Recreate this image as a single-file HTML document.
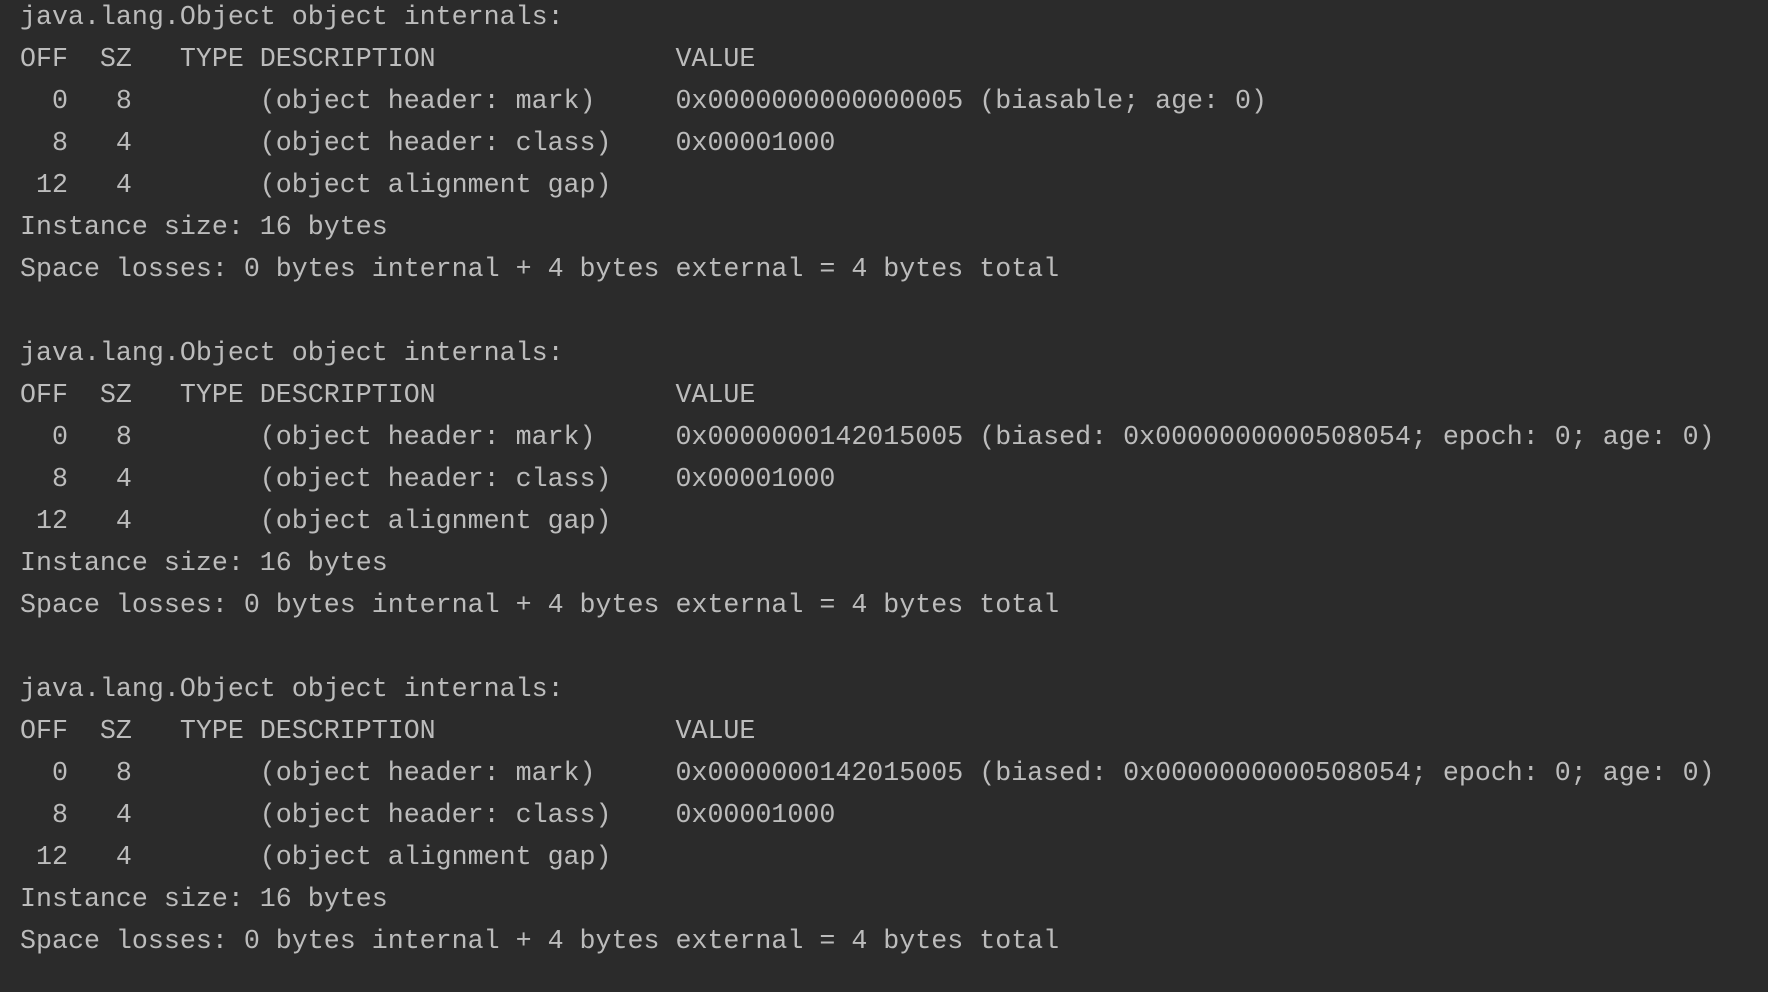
<!DOCTYPE html>
<html><head><meta charset="utf-8"><style>
html,body{margin:0;padding:0;background:#2b2b2b;width:1768px;height:992px;overflow:hidden}
pre{margin:0;position:absolute;left:20px;top:-3px;font-family:"Liberation Mono",monospace;font-size:26.65px;line-height:42px;color:#bcbcbc;white-space:pre}
</style></head><body><pre>java.lang.Object object internals:
OFF  SZ   TYPE DESCRIPTION               VALUE
  0   8        (object header: mark)     0x0000000000000005 (biasable; age: 0)
  8   4        (object header: class)    0x00001000
 12   4        (object alignment gap)
Instance size: 16 bytes
Space losses: 0 bytes internal + 4 bytes external = 4 bytes total

java.lang.Object object internals:
OFF  SZ   TYPE DESCRIPTION               VALUE
  0   8        (object header: mark)     0x0000000142015005 (biased: 0x0000000000508054; epoch: 0; age: 0)
  8   4        (object header: class)    0x00001000
 12   4        (object alignment gap)
Instance size: 16 bytes
Space losses: 0 bytes internal + 4 bytes external = 4 bytes total

java.lang.Object object internals:
OFF  SZ   TYPE DESCRIPTION               VALUE
  0   8        (object header: mark)     0x0000000142015005 (biased: 0x0000000000508054; epoch: 0; age: 0)
  8   4        (object header: class)    0x00001000
 12   4        (object alignment gap)
Instance size: 16 bytes
Space losses: 0 bytes internal + 4 bytes external = 4 bytes total
</pre></body></html>
